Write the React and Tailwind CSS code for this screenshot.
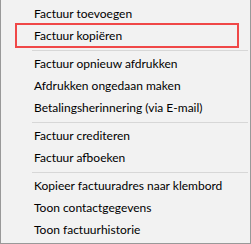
const groups = [
  ['Factuur toevoegen', 'Factuur kopiëren'],
  ['Factuur opnieuw afdrukken', 'Afdrukken ongedaan maken', 'Betalingsherinnering (via E-mail)'],
  ['Factuur crediteren', 'Factuur afboeken'],
  ['Kopieer factuuradres naar klembord', 'Toon contactgegevens', 'Toon factuurhistorie'],
];

function Item({ label }) {
  return (
    <div className="h-[22px] flex items-center pl-[33px] whitespace-nowrap">
      {label}
    </div>
  );
}

function Separator() {
  return (
    <div className="h-[6px] flex items-center pl-[31px] pr-[2px]">
      <div className="h-px w-full bg-[#d7d7d7]" />
    </div>
  );
}

export default function App() {
  return (
    <div
      className="relative w-[251px] h-[244px] bg-[#f2f2f2] border-l border-r border-b border-[#999999] pt-[3px] text-[12px] text-black"
      style={{ fontFamily: 'Lato, "Noto Sans", sans-serif' }}
    >
      {groups.map((g, gi) => (
        <div key={gi} className="flex flex-col">
          {gi > 0 && <Separator />}
          {g.map((l) => (
            <Item key={l} label={l} />
          ))}
        </div>
      ))}
      <div className="absolute left-[14px] top-[23px] w-[224px] h-[25px] border-2 border-[#f04848]" />
    </div>
  );
}
